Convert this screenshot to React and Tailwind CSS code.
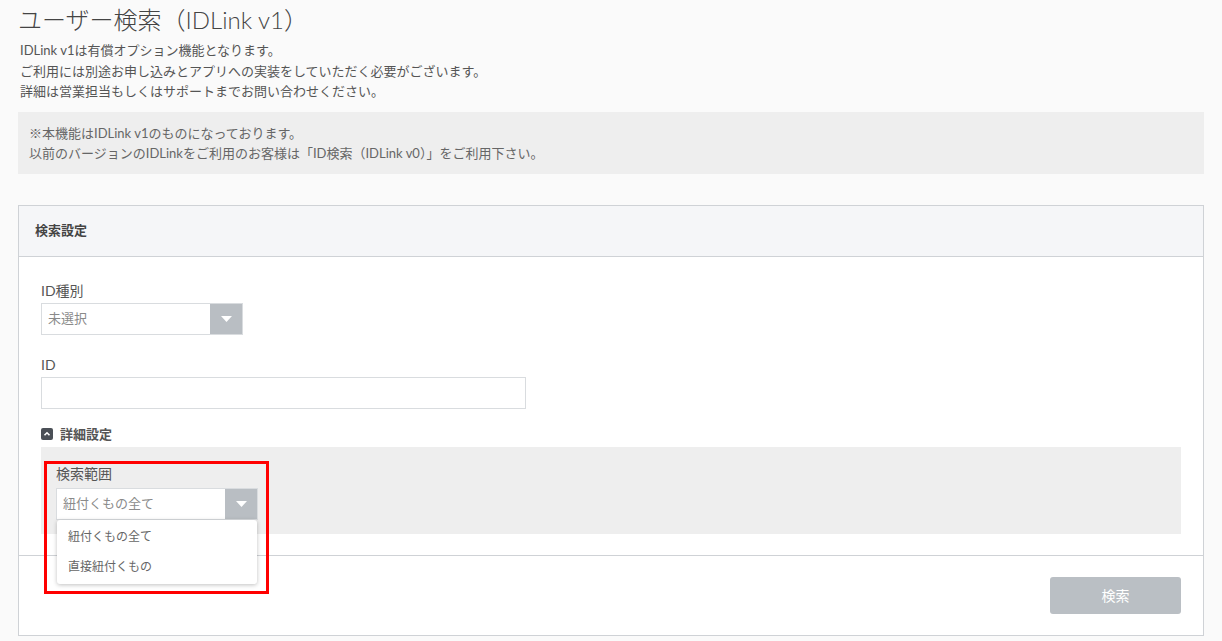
import { useState } from 'react';

const font = { fontFamily: 'Lato, "Noto Sans CJK JP", sans-serif' };

// Gray select with a separate arrow block on the right
function SelectBox({ value, width = 'w-[202px]' }) {
  return (
    <div className={`flex h-[32px] ${width} border border-[#d9dcdf] bg-white`}>
      <div className="flex flex-1 items-center pl-[6px] text-[13px] text-[#8a8a8a]">{value}</div>
      <div className="flex w-[32px] items-center justify-center bg-[#b9bec3]">
        <svg width="11" height="6" viewBox="0 0 11 6">
          <path d="M0 0 L11 0 L5.5 6 Z" fill="#fff" />
        </svg>
      </div>
    </div>
  );
}

export default function App() {
  const [open] = useState(true);

  return (
    <div className="min-h-[641px] bg-[#fafafa] px-[18px] pt-[4px] pb-[6px] text-[#555]" style={font}>
      <h1 className="text-[24px] font-light leading-[32px] text-[#444]">ユーザー検索（IDLink v1）</h1>

      {/* Description */}
      <div className="mt-[4px] pl-[2px] text-[13px] leading-[20.5px] text-[#555]">
        <p>IDLink v1は有償オプション機能となります。</p>
        <p>ご利用には別途お申し込みとアプリへの実装をしていただく必要がございます。</p>
        <p>詳細は営業担当もしくはサポートまでお問い合わせください。</p>
      </div>

      {/* Notice */}
      <div className="mt-[10px] bg-[#eeeeee] px-[11px] py-[11px] text-[13px] leading-[20px] text-[#666]">
        <p>※本機能はIDLink v1のものになっております。</p>
        <p>以前のバージョンのIDLinkをご利用のお客様は「ID検索（IDLink v0）」をご利用下さい。</p>
      </div>

      {/* Search settings card */}
      <div className="mt-[31px] border border-[#cfd2d6] bg-white">
        <div className="flex h-[51px] items-center border-b border-[#cfd2d6] bg-[#f5f6f8] px-[16px] text-[13px] font-bold text-[#444]">
          検索設定
        </div>

        <div className="px-[22px] pt-[24px] pb-[21px]">
          <label className="block text-[14px] leading-[20px] text-[#555]">ID種別</label>
          <div className="mt-[2px]">
            <SelectBox value="未選択" />
          </div>

          <label className="mt-[20px] block text-[14px] leading-[20px] text-[#555]">ID</label>
          <input
            type="text"
            className="mt-[2px] block h-[32px] w-[485px] border border-[#d9dcdf] bg-white px-2 text-[13px] outline-none"
          />

          <div className="mt-[15px] flex items-center gap-[7px] text-[13px] font-bold leading-[20px] text-[#555]">
            <svg width="12" height="12" viewBox="0 0 12 12">
              <rect width="12" height="12" rx="2" fill="#4b5057" />
              <path d="M3.5 7.3 L6 4.8 L8.5 7.3" fill="none" stroke="#fff" strokeWidth="1.6" />
            </svg>
            詳細設定
          </div>

          {/* Advanced panel */}
          <div className="relative mt-[3px] bg-[#eeeeee] px-[15px] pt-[17px] pb-[14px]">
            <label className="block text-[14px] leading-[20px] text-[#555]">検索範囲</label>
            <div className="relative mt-[4px] w-[202px]">
              <SelectBox value="紐付くもの全て" />
              {open && (
                <ul className="absolute left-[1px] top-[32px] z-10 w-[200px] rounded-[3px] bg-white py-[2px] text-[12px] text-[#666] shadow-[0_1px_4px_rgba(0,0,0,0.25)]">
                  <li className="flex h-[30px] items-center pl-[11px]">紐付くもの全て</li>
                  <li className="flex h-[30px] items-center pl-[11px]">直接紐付くもの</li>
                </ul>
              )}
            </div>
            {/* highlight annotation */}
            <div className="pointer-events-none absolute left-[3px] top-[14px] z-20 h-[133px] w-[225px] border-[3px] border-[#ff0000]" />
          </div>
        </div>

        <div className="flex justify-end border-t border-[#cfd2d6] px-[22px] py-[21px]">
          <button className="h-[37px] w-[131px] rounded-[3px] bg-[#babfc4] text-[14px] text-white">検索</button>
        </div>
      </div>
    </div>
  );
}
